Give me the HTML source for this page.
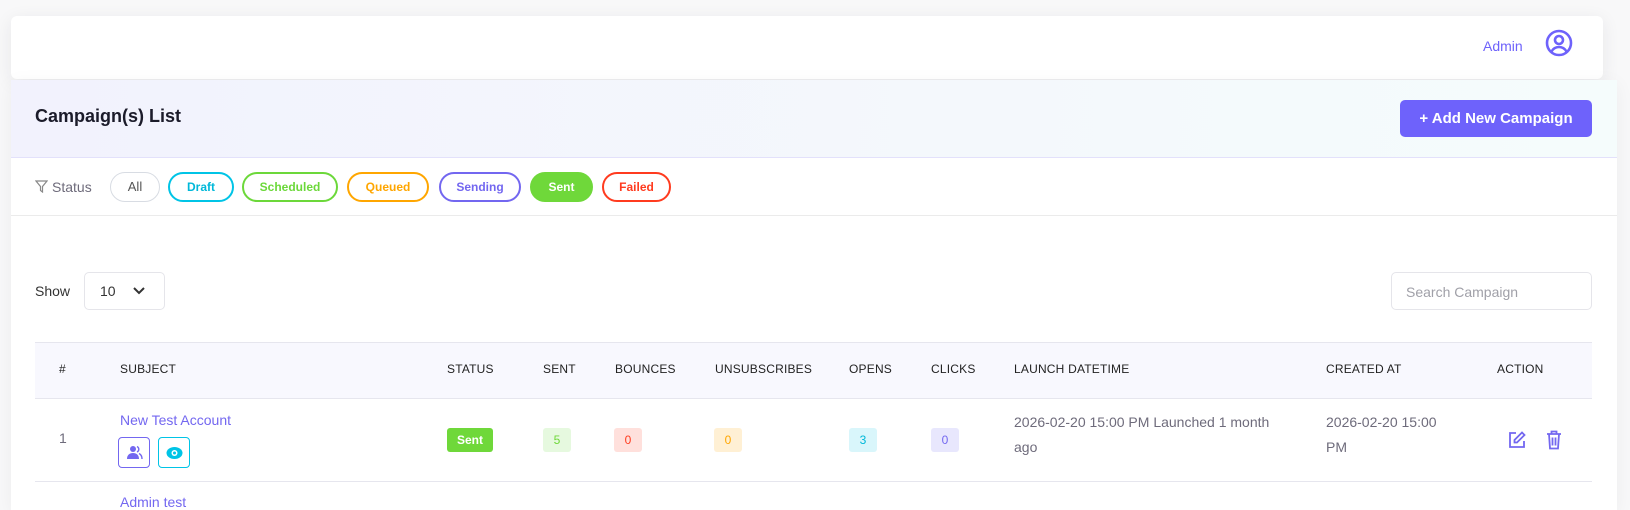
<!DOCTYPE html>
<html><head><meta charset="utf-8"><style>
*{box-sizing:border-box;margin:0;padding:0}
body{width:1630px;height:500px;overflow:hidden;background:#f8f8f9;font-family:"Liberation Sans",sans-serif;position:relative;color:#6e6b7b}
.abs{position:absolute}
.nav{left:11px;top:16px;width:1592px;height:63px;background:#fff;border-radius:6px;box-shadow:0 4px 18px rgba(34,41,47,.08)}
.card{left:11px;top:80px;width:1606px;height:430px;background:#fff;box-shadow:0 4px 18px rgba(34,41,47,.05)}
.hdr{left:0;top:0;width:1606px;height:78px;background:linear-gradient(90deg,#f2f2fd,#f5fcfc);border-bottom:1px solid #e3e1fb}
.title{left:24px;top:26px;font-size:18px;font-weight:bold;color:#1b1b2a}
.btn{left:1389px;top:20px;width:192px;height:37px;background:#6e62fb;border-radius:5px;color:#fff;font-weight:bold;font-size:15px;line-height:37px;text-align:center}
.pill{top:92px;height:30px;border-radius:15px;border:2px solid;font-size:13px;line-height:26px;text-align:center}
.th{top:262px;height:57px;left:24px;width:1557px;background:#f8f8fe;border-top:1px solid #e6e6ee;border-bottom:1px solid #e6e6ee}
.h{top:282px;font-size:12px;color:#222;letter-spacing:.2px}
.b{top:348px;height:24px;border-radius:3px;font-size:12px;line-height:24px;text-align:center;width:28px}
.t{font-size:14px;color:#6e6b7b;line-height:25px}
</style></head><body>
<div class="abs nav">
 <div class="abs" style="left:1472px;top:22px;font-size:14px;color:#6e62fb">Admin</div>
 <svg class="abs" style="left:1534px;top:13px" width="28" height="28" viewBox="0 0 28 28" fill="none" stroke="#6e62fb" stroke-width="2.6"><circle cx="14" cy="14" r="12"/><circle cx="14" cy="11" r="4"/><path d="M6.5 22.5c2-3.5 4.5-4.5 7.5-4.5s5.5 1 7.5 4.5"/></svg>
</div>
<div class="abs card">
 <div class="abs hdr">
  <div class="abs title">Campaign(s) List</div>
  <div class="abs btn">+ Add New Campaign</div>
 </div>
 <div class="abs" style="left:0;top:135px;width:1606px;border-bottom:1px solid #ebebeb"></div>
 <svg class="abs" style="left:24px;top:100px" width="13" height="13" viewBox="0 0 13 13" fill="none" stroke="#888" stroke-width="1.2"><path d="M1 1h11L7.5 6.5V12L5.5 10.5V6.5z"/></svg>
 <div class="abs" style="left:41px;top:99px;font-size:14px;color:#6e6b7b">Status</div>
 <div class="abs pill" style="left:99px;width:50px;border-color:#d8dce3;border-width:1px;line-height:28px;color:#555">All</div>
 <div class="abs pill" style="left:157px;width:66px;border-color:#00c4e6;color:#00b8d9;font-weight:bold;font-size:12px">Draft</div>
 <div class="abs pill" style="left:231px;width:96px;border-color:#6cd83a;color:#6cd83a;font-weight:bold;font-size:12px">Scheduled</div>
 <div class="abs pill" style="left:336px;width:82px;border-color:#ffa600;color:#ffa600;font-weight:bold;font-size:12px">Queued</div>
 <div class="abs pill" style="left:428px;width:82px;border-color:#7367f0;color:#7367f0;font-weight:bold;font-size:12px">Sending</div>
 <div class="abs pill" style="left:519px;width:63px;border-color:#6fd83a;background:#6fd83a;color:#fff;font-weight:bold;font-size:12px">Sent</div>
 <div class="abs pill" style="left:591px;width:69px;border-color:#ff3b1f;color:#ff3b1f;font-weight:bold;font-size:12px">Failed</div>

 <div class="abs" style="left:24px;top:203px;font-size:14px;color:#333">Show</div>
 <div class="abs" style="left:73px;top:192px;width:81px;height:38px;border:1px solid #e5e5ea;border-radius:5px">
  <div class="abs" style="left:15px;top:10px;font-size:14px;color:#333">10</div>
  <svg class="abs" style="left:47px;top:13px" width="14" height="10" viewBox="0 0 14 10" fill="none" stroke="#333" stroke-width="2"><path d="M2 2l5 5 5-5"/></svg>
 </div>
 <div class="abs" style="left:1380px;top:192px;width:201px;height:38px;border:1px solid #e5e5ea;border-radius:5px;font-size:14px;color:#a0a0a8;padding:11px 14px">Search Campaign</div>

 <div class="abs th"></div>
 <div class="abs h" style="left:48px">#</div>
 <div class="abs h" style="left:109px">SUBJECT</div>
 <div class="abs h" style="left:436px">STATUS</div>
 <div class="abs h" style="left:532px">SENT</div>
 <div class="abs h" style="left:604px">BOUNCES</div>
 <div class="abs h" style="left:704px">UNSUBSCRIBES</div>
 <div class="abs h" style="left:838px">OPENS</div>
 <div class="abs h" style="left:920px">CLICKS</div>
 <div class="abs h" style="left:1003px">LAUNCH DATETIME</div>
 <div class="abs h" style="left:1315px">CREATED AT</div>
 <div class="abs h" style="left:1486px">ACTION</div>

 <div class="abs t" style="left:48px;top:346px">1</div>
 <div class="abs" style="left:109px;top:332px;font-size:14px;color:#7367f0">New Test Account</div>
 <div class="abs" style="left:107px;top:357px;width:32px;height:31px;border:1px solid #7367f0;border-radius:4px">
  <svg class="abs" style="left:8px;top:7px" width="16" height="15" viewBox="0 0 16 15" fill="#7367f0"><circle cx="6" cy="4" r="3"/><path d="M0 14c0-4 2.5-6 6-6s6 2 6 6z"/><path d="M10 1.5a3 3 0 010 5.5M12 8.5c2 1 3 3 3 5.5" fill="none" stroke="#7367f0" stroke-width="1.4"/></svg>
 </div>
 <div class="abs" style="left:147px;top:357px;width:32px;height:31px;border:1px solid #00c4e6;border-radius:4px">
  <svg class="abs" style="left:7px;top:8px" width="17" height="14" viewBox="0 0 17 14"><ellipse cx="8.5" cy="7" rx="8" ry="6" fill="#00c4e6"/><circle cx="8.5" cy="7" r="3" fill="#fff"/><circle cx="8.5" cy="7" r="1.5" fill="#00c4e6"/></svg>
 </div>
 <div class="abs b" style="left:436px;width:46px;background:#6fd83a;color:#fff;font-weight:bold">Sent</div>
 <div class="abs b" style="left:532px;background:#e6f9df;color:#6fd83a">5</div>
 <div class="abs b" style="left:603px;background:#ffe0dc;color:#ff3b1f">0</div>
 <div class="abs b" style="left:703px;background:#fff0d4;color:#ffa600">0</div>
 <div class="abs b" style="left:838px;background:#d9f6fb;color:#00b8d9">3</div>
 <div class="abs b" style="left:920px;background:#e8e7fd;color:#7367f0">0</div>
 <div class="abs t" style="left:1003px;top:330px;width:300px">2026-02-20 15:00 PM Launched 1 month<br>ago</div>
 <div class="abs t" style="left:1315px;top:330px;width:130px">2026-02-20 15:00<br>PM</div>
 <svg class="abs" style="left:1497px;top:351px" width="18" height="18" viewBox="0 0 18 18" fill="none" stroke="#7367f0" stroke-width="1.8"><path d="M8 2H2v14h14v-6"/><path d="M14 1.5l2.5 2.5L9 11.5H6.5V9z"/></svg>
 <svg class="abs" style="left:1535px;top:350px" width="16" height="20" viewBox="0 0 16 20" fill="none" stroke="#7367f0" stroke-width="1.8"><path d="M1 4h14M5.5 4V1.5h5V4M3 4l1 14.5h8L13 4M6.5 7.5v8M9.5 7.5v8"/></svg>
 <div class="abs" style="left:24px;top:401px;width:1557px;border-top:1px solid #e6e6ee"></div>
 <div class="abs" style="left:109px;top:414px;font-size:14px;color:#7367f0">Admin test</div>
</div>
</body></html>
